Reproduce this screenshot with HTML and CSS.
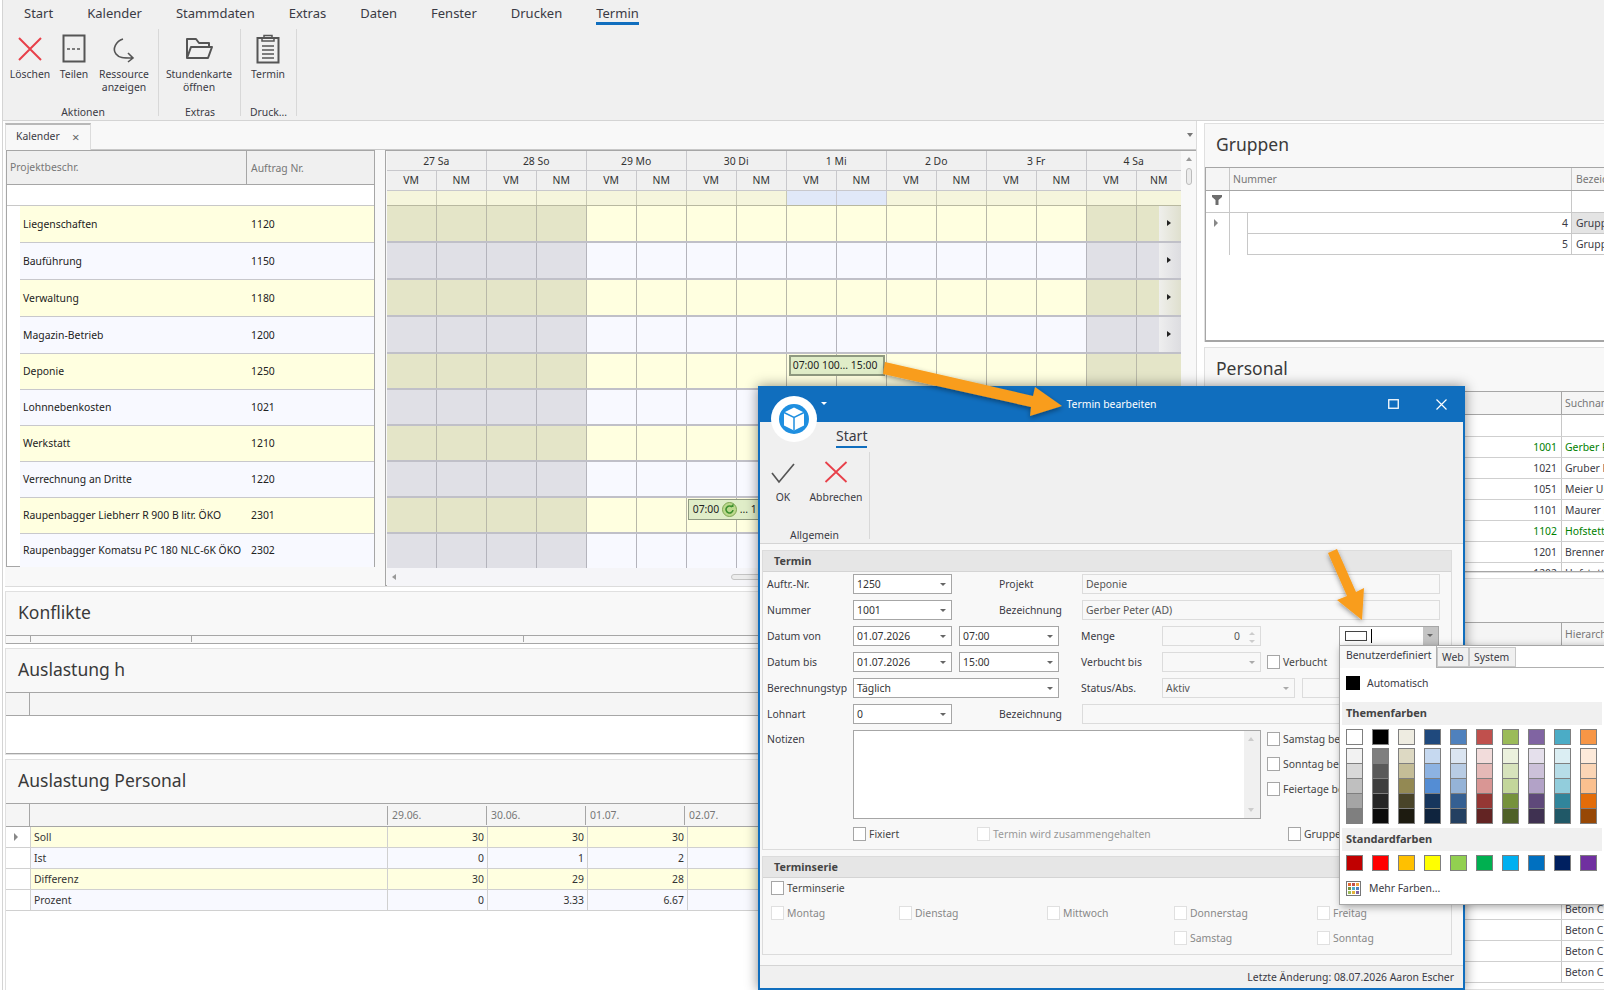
FILE: index.html
```html
<!DOCTYPE html>
<html lang="de">
<head>
  <meta charset="UTF-8">
  <meta name="viewport" content="width=device-width, initial-scale=1.0">
  <title>Termin bearbeiten</title>
  <link rel="stylesheet" href="styles.css">
</head>
<body>

<div class="app">

  <!-- Hauptmenue -->
  <header class="ribbon">
    <nav class="rtabs">
      <span>Start</span><span>Kalender</span><span>Stammdaten</span><span>Extras</span>
      <span>Daten</span><span>Fenster</span><span>Drucken</span><span class="on">Termin</span>
    </nav>
    <div class="rgroups">
      <div class="rgroup g1">
        <div class="rbtns">
          <div class="rbtn w44">
            <svg width="32" height="30" viewBox="0 0 32 30"><path d="M5 4 27 26M27 4 5 26" stroke="#e8404a" stroke-width="2" fill="none"/></svg>
            <span>Löschen</span>
          </div>
          <div class="rbtn w44">
            <svg width="32" height="30" viewBox="0 0 32 30"><rect x="5.5" y="1.5" width="21" height="26" fill="none" stroke="#555" stroke-width="2"/><path d="M9 15h14" stroke="#555" stroke-width="1.5" stroke-dasharray="3 2" fill="none"/></svg>
            <span>Teilen</span>
          </div>
          <div class="rbtn w56">
            <svg width="32" height="30" viewBox="0 0 32 30"><path d="M15 5C8 7 4 15 8 20 11 24 15 24 25 24M20 19l5 5-5 4" stroke="#555" stroke-width="1.6" fill="none"/></svg>
            <span>Ressource<br>anzeigen</span>
          </div>
        </div>
        <div class="rcap">Aktionen</div>
      </div>
      <div class="rgroup g2">
        <div class="rbtns">
          <div class="rbtn w78">
            <svg width="32" height="30" viewBox="0 0 32 30"><path d="M4 24V5h9l3 4h10v4M4 24l4-11h21l-4 11z" stroke="#555" stroke-width="2" fill="none" stroke-linejoin="round"/></svg>
            <span>Stundenkarte<br>öffnen</span>
          </div>
        </div>
        <div class="rcap">Extras</div>
      </div>
      <div class="rgroup g3">
        <div class="rbtns">
          <div class="rbtn w54">
            <svg width="32" height="30" viewBox="0 0 32 30"><rect x="5.5" y="4" width="21" height="24.5" fill="none" stroke="#555" stroke-width="2"/><path d="M12 4V1.5h8V4h2v3H10V4zM10 12h12M10 16h12M10 20h12M10 24h12" stroke="#555" stroke-width="1.5" fill="none"/></svg>
            <span>Termin</span>
          </div>
        </div>
        <div class="rcap">Druck...</div>
      </div>
    </div>
  </header>

  <div class="workspace">

    <!-- linke Spalte -->
    <div class="left">
      <section class="doc">
        <div class="doc-tabs">
          <div class="doc-tab">Kalender <span class="doc-x">×</span></div>
          <span class="doc-menu"></span>
        </div>
        <div class="doc-body">

          <div class="plan-list">
            <div class="pl-head"><div class="pl-c1">Projektbeschr.</div><div class="pl-c2">Auftrag Nr.</div></div>
            <div class="pl-filter"></div>
            <div class="pl-row y tall"><div class="pl-c1">Liegenschaften</div><div class="pl-c2">1120</div></div>
            <div class="pl-row b tall"><div class="pl-c1">Bauführung</div><div class="pl-c2">1150</div></div>
            <div class="pl-row y tall"><div class="pl-c1">Verwaltung</div><div class="pl-c2">1180</div></div>
            <div class="pl-row b tall"><div class="pl-c1">Magazin-Betrieb</div><div class="pl-c2">1200</div></div>
            <div class="pl-row y"><div class="pl-c1">Deponie</div><div class="pl-c2">1250</div></div>
            <div class="pl-row b"><div class="pl-c1">Lohnnebenkosten</div><div class="pl-c2">1021</div></div>
            <div class="pl-row y"><div class="pl-c1">Werkstatt</div><div class="pl-c2">1210</div></div>
            <div class="pl-row b"><div class="pl-c1">Verrechnung an Dritte</div><div class="pl-c2">1220</div></div>
            <div class="pl-row y"><div class="pl-c1">Raupenbagger Liebherr R 900 B litr. ÖKO</div><div class="pl-c2">2301</div></div>
            <div class="pl-row b last"><div class="pl-c1">Raupenbagger Komatsu PC 180 NLC-6K ÖKO</div><div class="pl-c2">2302</div></div>
          </div>

          <div class="sched">
            <div class="sched-main">
              <div class="s-days">
                <div>27 Sa</div><div>28 So</div><div>29 Mo</div><div>30 Di</div><div>1 Mi</div><div>2 Do</div><div>3 Fr</div><div class="lastday">4 Sa</div>
              </div>
              <div class="s-half">
                <div>VM</div><div>NM</div><div>VM</div><div>NM</div><div>VM</div><div>NM</div><div>VM</div><div>NM</div>
                <div>VM</div><div>NM</div><div>VM</div><div>NM</div><div>VM</div><div>NM</div><div>VM</div><div class="lasthalf">NM</div>
              </div>
              <div class="s-all"><span class="today"></span></div>
              <div class="s-row y tall"><span class="more"></span></div>
              <div class="s-row b tall"><span class="more"></span></div>
              <div class="s-row y tall"><span class="more"></span></div>
              <div class="s-row b tall"><span class="more"></span></div>
              <div class="s-row y"><div class="appt a1">07:00 100... 15:00</div></div>
              <div class="s-row b"></div>
              <div class="s-row y"></div>
              <div class="s-row b"></div>
              <div class="s-row y"><div class="appt a2">07:00
                <svg class="rec" width="15" height="15" viewBox="0 0 15 15"><circle cx="7.5" cy="7.5" r="7" fill="#bcd98c" stroke="#7fa653"/><path d="M11 8a3.5 3.5 0 1 1-1-3" fill="none" stroke="#3d8f2e" stroke-width="1.6"/><path d="M8 5h3.5V1.5z" fill="#3d8f2e"/></svg>
                ... 1</div></div>
              <div class="s-row b last"></div>
              <div class="s-hscroll"><span class="arr-left"></span><span class="s-thumb"></span></div>
            </div>
            <div class="s-vscroll"><span class="arr-up"></span><span class="v-thumb"></span></div>
          </div>

        </div>
      </section>

      <section class="panel konflikte">
        <h2>Konflikte</h2>
        <div class="kon-head"><i></i><i class="t2"></i><i class="t3"></i></div>
      </section>

      <section class="panel auslast">
        <h2>Auslastung h</h2>
        <div class="grid-head"><div class="ind"></div></div>
      </section>

      <section class="panel personal-load">
        <h2>Auslastung Personal</h2>
        <div class="load">
          <div class="load-row head"><div class="ind"></div><div class="cn"></div><div class="cd">29.06.</div><div class="cd">30.06.</div><div class="cd">01.07.</div><div class="cd">02.07.</div></div>
          <div class="load-row y"><div class="ind"><span class="tri"></span></div><div class="cn">Soll</div><div class="cv">30</div><div class="cv">30</div><div class="cv">30</div><div class="cv"></div></div>
          <div class="load-row b"><div class="ind"></div><div class="cn">Ist</div><div class="cv">0</div><div class="cv">1</div><div class="cv">2</div><div class="cv"></div></div>
          <div class="load-row y"><div class="ind"></div><div class="cn">Differenz</div><div class="cv">30</div><div class="cv">29</div><div class="cv">28</div><div class="cv"></div></div>
          <div class="load-row b"><div class="ind"></div><div class="cn">Prozent</div><div class="cv">0</div><div class="cv">3.33</div><div class="cv">6.67</div><div class="cv"></div></div>
        </div>
      </section>
    </div>

    <!-- rechte Spalte -->
    <div class="right">
      <section class="panel gruppen">
        <h2>Gruppen</h2>
        <div class="gr-grid">
          <div class="gr-head"><div class="gr-ind"></div><div class="gr-num">Nummer</div><div class="gr-name">Bezeichnung</div></div>
          <div class="gr-filter"><div class="gr-ind">
            <svg width="10" height="10" viewBox="0 0 10 10"><path d="M0 0h10v2L6.500 5v5h-3V5L0 2z" fill="#6d6d6d"/></svg>
          </div><div class="gr-num"></div><div class="gr-name"></div></div>
          <div class="gr-row"><div class="gr-ind"><span class="tri"></span></div><div class="gr-pad"></div><div class="gr-val">4</div><div class="gr-name sel">Gruppe Bau</div></div>
          <div class="gr-row"><div class="gr-ind"></div><div class="gr-pad"></div><div class="gr-val">5</div><div class="gr-name">Gruppe Tief</div></div>
        </div>
      </section>

      <section class="panel personal">
        <h2>Personal</h2>
        <div class="pe-grid">
          <div class="pe-head"><div class="pe-num"></div><div class="pe-name">Suchname</div></div>
          <div class="pe-row filter"><div class="pe-num"></div><div class="pe-name"></div></div>
          <div class="pe-row act"><div class="pe-num">1001</div><div class="pe-name">Gerber Peter</div></div>
          <div class="pe-row"><div class="pe-num">1021</div><div class="pe-name">Gruber Franz</div></div>
          <div class="pe-row"><div class="pe-num">1051</div><div class="pe-name">Meier Urs</div></div>
          <div class="pe-row"><div class="pe-num">1101</div><div class="pe-name">Maurer Paul</div></div>
          <div class="pe-row act"><div class="pe-num">1102</div><div class="pe-name">Hofstetter Hans</div></div>
          <div class="pe-row"><div class="pe-num">1201</div><div class="pe-name">Brenner Max</div></div>
          <div class="pe-row"><div class="pe-num">1202</div><div class="pe-name">Hofstetter Anna</div></div>
        </div>
      </section>

      <section class="panel material">
        <h2>Material</h2>
        <div class="pe-grid">
          <div class="pe-head"><div class="pe-num"></div><div class="pe-name">Hierarchie</div></div>
          <div class="pe-row filter"><div class="pe-num"></div><div class="pe-name"></div></div>
          <div class="pe-row"><div class="pe-num"></div><div class="pe-name">Beton</div></div>
          <div class="pe-row"><div class="pe-num"></div><div class="pe-name">Beton</div></div>
          <div class="pe-row"><div class="pe-num"></div><div class="pe-name">Beton</div></div>
          <div class="pe-row"><div class="pe-num"></div><div class="pe-name">Beton</div></div>
          <div class="pe-row"><div class="pe-num"></div><div class="pe-name">Beton</div></div>
          <div class="pe-row"><div class="pe-num"></div><div class="pe-name">Beton</div></div>
          <div class="pe-row"><div class="pe-num"></div><div class="pe-name">Beton</div></div>
          <div class="pe-row"><div class="pe-num"></div><div class="pe-name">Beton</div></div>
          <div class="pe-row"><div class="pe-num"></div><div class="pe-name">Beton</div></div>
          <div class="pe-row"><div class="pe-num"></div><div class="pe-name">Beton</div></div>
          <div class="pe-row"><div class="pe-num"></div><div class="pe-name sel">Diesel</div></div>
          <div class="pe-row"><div class="pe-num"></div><div class="pe-name">Beton C 25/30</div></div>
          <div class="pe-row"><div class="pe-num"></div><div class="pe-name">Beton C 30/37</div></div>
          <div class="pe-row"><div class="pe-num"></div><div class="pe-name">Beton C 35/45</div></div>
          <div class="pe-row"><div class="pe-num"></div><div class="pe-name">Beton C 40/50</div></div>
        </div>
      </section>
    </div>
  </div>

  <!-- Dialog -->
  <div class="dialog">
    <div class="dlg-title">
      <span>Termin bearbeiten</span>
      <svg class="dlg-max" width="11" height="10" viewBox="0 0 11 10"><rect x=".75" y=".75" width="9.500" height="8.500" fill="none" stroke="#fff" stroke-width="1.3"/></svg>
      <svg class="dlg-close" width="11" height="11" viewBox="0 0 11 11"><path d="M.5.500l10 10M10.500.500l-10 10" stroke="#fff" stroke-width="1.200" fill="none"/></svg>
      <span class="dlg-caret"></span>
    </div>
    <div class="dlg-logo">
      <svg width="30" height="30" viewBox="0 0 30 30"><circle cx="15" cy="15" r="15" fill="#1f8fe0"/><path d="M15 3.500l10 5v13l-10 5-10-5v-13z" fill="#fff"/><path d="M5 8.500l10 5 10-5M15 13.500v13" stroke="#1f8fe0" stroke-width="1.500" fill="none"/></svg>
    </div>

    <div class="dlg-ribbon">
      <div class="dlg-tab"><span>Start</span></div>
      <div class="dlg-group">
        <div class="rbtns">
          <div class="dbtn ok">
            <svg width="26" height="24" viewBox="0 0 26 24"><path d="M2 13l7 9L24 4" stroke="#555" stroke-width="1.700" fill="none"/></svg>
            <span>OK</span>
          </div>
          <div class="dbtn cancel">
            <svg width="26" height="24" viewBox="0 0 26 24"><path d="M2.500 2 23.500 22M23.500 2 2.500 22" stroke="#e8404a" stroke-width="1.800" fill="none"/></svg>
            <span>Abbrechen</span>
          </div>
        </div>
        <div class="rcap">Allgemein</div>
      </div>
    </div>

    <div class="dlg-body">
      <div class="fgroup termin">
        <div class="fhead">Termin</div>
        <div class="form">
          <div class="frow">
            <label>Auftr.-Nr.</label>
            <div class="box combo c2">1250</div>
            <label class="l2">Projekt</label>
            <div class="box ro wide">Deponie</div>
          </div>
          <div class="frow">
            <label>Nummer</label>
            <div class="box combo c2">1001</div>
            <label class="l2">Bezeichnung</label>
            <div class="box ro wide">Gerber Peter (AD)</div>
          </div>
          <div class="frow">
            <label>Datum von</label>
            <div class="box combo c2">01.07.2026</div>
            <div class="box combo c4">07:00</div>
            <label class="l6">Menge</label>
            <div class="box ro c7 num">0<span class="spin"></span></div>
            <div class="color-edit">
              <div class="ce-field"><span class="ce-swatch"></span><span class="ce-cursor"></span></div>
              <div class="ce-btn"></div>
              <div class="popup">
                <div class="pop-tabs"><span class="active">Benutzerdefiniert</span><span class="t-web">Web</span><span class="t-sys">System</span></div>
                <div class="pop-auto"><i></i>Automatisch</div>
                <div class="pop-head">Themenfarben</div>
                <div class="pal-row" id="palTheme"></div>
                <div class="pal-cols" id="palShades"></div>
                <div class="pop-head std">Standardfarben</div>
                <div class="pal-row std" id="palStd"></div>
                <div class="pop-more">
                  <svg width="15" height="15" viewBox="0 0 15 15"><rect x=".5" y=".5" width="14" height="14" fill="#fff" stroke="#777"/><path d="M2 2h3v3H2z" fill="#e2662f"/><path d="M6 2h3v3H6z" fill="#c0504d"/><path d="M10 2h3v3h-3z" fill="#f2a33a"/><path d="M2 6h3v3H2z" fill="#76923c"/><path d="M6 6h3v3H6z" fill="#4bacc6"/><path d="M10 6h3v3h-3z" fill="#4f81bd"/><path d="M2 10h3v3H2z" fill="#9bbb59"/><path d="M6 10h3v3H6z" fill="#e3b23c"/><path d="M10 10h3v3h-3z" fill="#8064a2"/></svg>
                  Mehr Farben...
                </div>
              </div>
            </div>
          </div>
          <div class="frow">
            <label>Datum bis</label>
            <div class="box combo c2">01.07.2026</div>
            <div class="box combo c4">15:00</div>
            <label class="l6">Verbucht bis</label>
            <div class="box combo ro c7"></div>
            <div class="check c9"><i></i>Verbucht</div>
          </div>
          <div class="frow">
            <label>Berechnungstyp</label>
            <div class="box combo c24">Täglich</div>
            <label class="l6">Status/Abs.</label>
            <div class="status">
              <div class="box combo ro">Aktiv</div>
              <div class="box ro blank"></div>
            </div>
          </div>
          <div class="frow">
            <label>Lohnart</label>
            <div class="box combo c2">0</div>
            <label class="l2">Bezeichnung</label>
            <div class="box ro wide"></div>
          </div>
          <div class="frow notes">
            <label>Notizen</label>
            <div class="memo">
              <div class="memo-bar"><span class="arr-up"></span><span class="arr-down"></span></div>
            </div>
            <div class="note-checks">
              <div class="check"><i></i>Samstag berücksichtigen</div>
              <div class="check"><i></i>Sonntag berücksichtigen</div>
              <div class="check"><i></i>Feiertage berücksichtigen</div>
            </div>
          </div>
          <div class="check-line">
            <div class="check"><i></i>Fixiert</div>
            <div class="check off"><i></i>Termin wird zusammengehalten</div>
            <div class="check"><i></i>Gruppe</div>
          </div>
        </div>
      </div>

      <div class="fgroup serie">
        <div class="fhead">Terminserie</div>
        <div class="check main"><i></i>Terminserie</div>
        <div class="days">
          <div class="check off"><i></i>Montag</div>
          <div class="check off"><i></i>Dienstag</div>
          <div class="check off"><i></i>Mittwoch</div>
          <div class="check off"><i></i>Donnerstag</div>
          <div class="check off"><i></i>Freitag</div>
          <div class="check off d4"><i></i>Samstag</div>
          <div class="check off"><i></i>Sonntag</div>
        </div>
      </div>
    </div>

    <div class="dlg-status">Letzte Änderung: 08.07.2026 Aaron Escher</div>
  </div>

  <!-- Pfeile -->
  <svg class="arrows" width="1604" height="990" viewBox="0 0 1604 990">
    <defs>
      <filter id="sh" x="-20%" y="-20%" width="140%" height="140%"><feDropShadow dx="0" dy="2" stdDeviation="2.500" flood-color="#000" flood-opacity=".4"/></filter>
    </defs>
    <path filter="url(#sh)" fill="#f99d1c" d="M885 362 1033 396 1035 387 1062 406 1030 416 1031 407 883 374z"/>
    <path filter="url(#sh)" fill="#f99d1c" d="M1328 553 1337 549 1356 592 1364 588 1362 620 1337 600 1347 596z"/>
  </svg>
</div>

<script src="script.js"></script>
</body>
</html>
```

FILE: styles.css
```css
* { box-sizing: border-box; }

html, body {
  margin: 0;
  padding: 0;
  width: 1604px;
  height: 990px;
  overflow: hidden;
}

body {
  font-family: "Noto Sans", "Open Sans", sans-serif;
  font-size: 10.4px;
  color: #3a3a44;
  background-color: #fff;
}

.app {
  position: relative;
  width: 1604px;
  height: 990px;
  overflow: hidden;
  padding-left: 2px;
}

/* Ribbon */
.ribbon {
  height: 121px;
  background-color: #f0f0f0;
  border-left: 1px solid #d4d4d4;
  border-bottom: 1px solid #d4d4d4;
  display: flex;
  flex-direction: column;
}

.rtabs {
  display: flex;
  gap: 34px;
  padding-left: 21px;
  height: 25px;
  font-size: 13px;
  line-height: 26px;
}

.rtabs .on {
  height: 25px;
  border-bottom: 3px solid #106ebe;
  line-height: 26px;
}

.rgroups {
  display: flex;
  margin-top: 4px;
  height: 87px;
}

.rgroup {
  display: flex;
  flex-direction: column;
  border-right: 1px solid #d8d8d8;
}

.g1 { width: 156px; padding-left: 5px; }
.g2 { width: 82px; padding-left: 1px; }
.g3 { width: 56px; }

.rbtns {
  display: flex;
  flex: 1;
}

.rbtn {
  display: flex;
  flex-direction: column;
  align-items: center;
  padding-top: 5px;
  text-align: center;
  line-height: 13px;
}

.rbtn svg { margin-bottom: 4px; }

.w44 { width: 44px; }
.w56 { width: 56px; }
.w78 { width: 78px; }
.w54 { width: 54px; }

.rcap {
  text-align: center;
  height: 14px;
  line-height: 14px;
  margin-bottom: -3px;
}

/* Arbeitsbereich */
.workspace {
  display: flex;
  height: 869px;
  background-color: #fff;
}

.left {
  width: 1195px;
  border-left: 1px solid #d4d4d4;
  display: flex;
  flex-direction: column;
  padding-left: 2px;
  background-color: #fff;
}

.right {
  flex: 1;
  margin-left: 7px;
  padding-top: 2px;
  min-width: 0;
  display: flex;
  flex-direction: column;
  gap: 5px;
}

.doc {
  height: 466px;
  background-color: #f8f8f8;
  border-bottom: 1px solid #dcdcdc;
  border-right: 1px solid #dcdcdc;
}

.doc-tabs {
  position: relative;
  height: 29px;
  border-bottom: 1px solid #c8c8c8;
  padding-top: 2px;
}

.doc-tab {
  width: 86px;
  height: 27px;
  background-color: #f8f8f8;
  border: 1px solid #dcdcdc;
  border-top: 2px solid #b8b8b8;
  border-bottom: 0;
  padding: 4px 0 0 10px;
  margin-bottom: -1px;
  position: relative;
}

.doc-x {
  position: absolute;
  left: 66px;
  top: 5px;
  color: #666;
  font-size: 13px;
  line-height: 14px;
}

.doc-menu {
  position: absolute;
  left: 1182px;
  top: 12px;
  border: 3px solid transparent;
  border-top: 4px solid #777;
}

.doc-body {
  display: flex;
  align-items: flex-start;
  height: 436px;
  padding-left: 1px;
}

/* Projektliste */
.plan-list {
  width: 369px;
  height: 417px;
  background-color: #fff;
  border: 1px solid #a6a6a6;
  border-top-width: 1px;
}

.pl-head {
  display: flex;
  height: 34px;
  background-color: #f0f0f0;
  border-bottom: 1px solid #a6a6a6;
  color: #777;
  align-items: center;
}

.pl-head .pl-c1 {
  width: 240px;
  padding-left: 3px;
  height: 100%;
  border-right: 1px solid #a6a6a6;
  line-height: 33px;
}

.pl-head .pl-c2 { padding-left: 4px; }

.pl-filter {
  height: 21px;
  border-bottom: 1px solid #c8c8c8;
}

.pl-row {
  display: flex;
  align-items: center;
  height: 36px;
  margin-left: 13px;
  padding-bottom: 1px;
  border-bottom: 1px solid #c8c8cc;
  color: #222;
}

.pl-row.tall { height: 37px; }
.pl-row.last { height: 33px; border-bottom: 0; }
.pl-row.y { background-color: #ffffe0; }
.pl-row.b { background-color: #f8f9ff; }

.pl-row .pl-c1 {
  width: 231px;
  padding-left: 3px;
  white-space: nowrap;
}

.pl-row .pl-c2 { padding-left: 0; }

/* Plantafel */
.sched {
  display: flex;
  margin-left: 10px;
  width: 812px;
  height: 436px;
  border-left: 1px solid #a6a6a6;
  border-top: 1px solid #a6a6a6;
  border-bottom: 1px solid #a6a6a6;
  background-color: #f8f8f8;
}

.sched-main { width: 794px; margin-left: 1px; }

.s-days, .s-half {
  display: flex;
  height: 20px;
  background-color: #f0f0f0;
  border-bottom: 1px solid #c8c8cc;
  text-align: center;
  line-height: 19px;
  color: #333;
}

.s-days { line-height: 20px; }

.s-days div {
  width: 100px;
  border-right: 1px solid #c8c8cc;
}

.s-days .lastday { width: 94px; border-right: 0; }

.s-half div {
  width: 50px;
  border-right: 1px solid #c8c8cc;
}

.s-half .lasthalf { width: 44px; border-right: 0; }

.s-all {
  position: relative;
  height: 15px;
  border-bottom: 1px solid #b8b8a0;
  background-color: #f5f5dc;
  background-image: repeating-linear-gradient(90deg, transparent 0 49px, #c8c8b4 49px 50px);
}

.s-all .today {
  position: absolute;
  left: 400px;
  top: 0;
  width: 100px;
  height: 14px;
  background-image: repeating-linear-gradient(90deg, transparent 0 49px, #c8c8d0 49px 50px);
  background-color: #e0e8f8;
}

.s-row {
  position: relative;
  height: 36px;
  border-bottom: 2px solid #c0c0c8;
}

.s-row.tall { height: 37px; }
.s-row.last { height: 34px; border-bottom: 0; }

.s-row.y {
  background-color: #ffffe0;
  background-image:
    repeating-linear-gradient(90deg, transparent 0 49px, #b8b8a8 49px 50px),
    linear-gradient(90deg, #e4e5c8 200px, transparent 200px 700px, #e4e5c8 700px);
}

.s-row.b {
  background-color: #f8f9ff;
  background-image:
    repeating-linear-gradient(90deg, transparent 0 49px, #b4b4bc 49px 50px),
    linear-gradient(90deg, #e0e0e6 200px, transparent 200px 700px, #e0e0e6 700px);
}

.more {
  position: absolute;
  right: 0;
  top: 0;
  width: 22px;
  height: 100%;
  background: linear-gradient(90deg, rgba(240, 240, 240, .9), rgba(215, 215, 215, .4));
}

.more::after {
  content: "";
  position: absolute;
  left: 8px;
  top: 14px;
  border: 3.5px solid transparent;
  border-left: 4px solid #222;
}

.appt {
  position: absolute;
  height: 21px;
  top: 1px;
  background-color: #e0edc8;
  border: 2px solid #8f9a80;
  color: #222;
  line-height: 17px;
  padding-left: 2px;
  white-space: nowrap;
  overflow: hidden;
}

.a1 { left: 402px; width: 96px; }
.a2 { left: 301px; width: 100px; border-width: 1px; padding-left: 4px; line-height: 18px; }

.rec { vertical-align: -4px; }

.s-hscroll {
  position: relative;
  height: 18px;
  background-color: #f5f5f8;
}

.arr-left {
  position: absolute;
  left: 5px;
  top: 6px;
  border: 3.5px solid transparent;
  border-left: 0;
  border-right: 4px solid #999;
}

.s-thumb {
  position: absolute;
  left: 344px;
  top: 6px;
  width: 300px;
  height: 6px;
  border: 1px solid #c4c4c4;
  border-radius: 3px;
  background-color: #ececec;
}

.s-vscroll {
  position: relative;
  flex: 1;
  background-color: #f8f8f8;
}

.arr-up {
  position: absolute;
  left: 5px;
  top: 6px;
  border: 3.5px solid transparent;
  border-top: 0;
  border-bottom: 4px solid #999;
}

.v-thumb {
  position: absolute;
  left: 5px;
  top: 17px;
  width: 6px;
  height: 17px;
  border: 1px solid #bcbcbc;
  border-radius: 3px;
  background-color: #ececec;
}

/* Panels */
.panel {
  background-color: #f8f8f8;
  border: 1px solid #e0e0e0;
  margin-top: 4px;
}

.right .panel { margin-top: 0; border-right: 0; }

.panel h2 {
  margin: 0;
  height: 43px;
  padding-left: 12px;
  font-size: 17.5px;
  font-weight: 400;
  line-height: 40px;
  color: #3a3a3a;
}

.right .panel h2 { padding-left: 11px; }

.konflikte { height: 53px; }

.kon-head {
  position: relative;
  height: 9px;
  border-top: 1px solid #a6a6a6;
  border-bottom: 1px solid #a6a6a6;
}

.kon-head i {
  position: absolute;
  left: 24px;
  top: 0;
  height: 6px;
  border-left: 1px solid #a6a6a6;
}

.kon-head .t2 { left: 185px; }
.kon-head .t3 { left: 517px; }

.auslast { height: 107px; }

.grid-head {
  height: 24px;
  background-color: #f5f5f5;
  border-top: 1px solid #a6a6a6;
  border-bottom: 1px solid #a6a6a6;
}

.grid-head .ind {
  width: 24px;
  height: 100%;
  border-right: 1px solid #a6a6a6;
}

.auslast::after {
  content: "";
  display: block;
  height: 37px;
  background-color: #fff;
  border-bottom: 1px solid #a6a6a6;
}

.personal-load { flex: 1; background-color: #f8f8f8; }

.load {
  height: 100%;
  background-color: #fff;
  border-top: 1px solid #a6a6a6;
}

.load-row {
  display: flex;
  height: 21px;
  line-height: 20px;
  color: #333;
}

.load-row .ind {
  position: relative;
  width: 24px;
  background-color: #f5f5f5;
  border-right: 1px solid #a6a6a6;
}

.load-row.head {
  height: 23px;
  background-color: #f5f5f5;
  border-bottom: 1px solid #a6a6a6;
  color: #777;
  line-height: 22px;
}

.load-row.y, .load-row.b { border-bottom: 1px solid #d0d0d0; }
.load-row.y { background-color: #ffffe0; }
.load-row.b { background-color: #f8f9ff; }

.cn {
  width: 358px;
  padding-left: 3px;
  border-right: 1px solid #d0d0d0;
}

.cd, .cv {
  width: 100px;
  border-right: 1px solid #d0d0d0;
}

.cd {
  padding-left: 4px;
  border-right: 0;
  border-left: 1px solid #a6a6a6;
  margin: 2px 0 2px -1px;
  height: 19px;
  line-height: 19px;
}

.head .cn { border-right: 0; }

.cv { text-align: right; padding-right: 3px; }

.load-row:not(.head) .ind { background-color: #fff; border-right: 0; width: 24px; }
.load-row:not(.head) .cn { border-left: 1px solid #d0d0d0; }

.tri {
  position: absolute;
  left: 8px;
  top: 6px;
  border: 4px solid transparent;
  border-left: 4px solid #888;
  border-right: 0;
}

/* Gruppen */
.gruppen { height: 219px; }

.gr-grid {
  height: 175px;
  background-color: #fff;
  border-top: 1px solid #a6a6a6;
  border-bottom: 2px solid #a6a6a6;
  border-left: 1px solid #a6a6a6;
}

.gr-head, .gr-filter, .gr-row { display: flex; }

.gr-head {
  height: 23px;
  background-color: #f5f5f5;
  border-bottom: 1px solid #a6a6a6;
  color: #777;
  line-height: 22px;
}

.gr-filter {
  height: 22px;
  border-bottom: 1px solid #c8c8c8;
}

.gr-ind {
  position: relative;
  width: 24px;
  border-right: 1px solid #c8c8c8;
  padding: 3px 0 0 6px;
  flex: none;
}

.gr-num {
  width: 342px;
  padding-left: 3px;
  border-right: 1px solid #c8c8c8;
  flex: none;
}

.gr-name { padding-left: 4px; white-space: nowrap; flex: 1; }

.gr-row { height: 21px; line-height: 20px; }

.gr-pad { width: 18px; flex: none; border-right: 1px solid #c8c8c8; }

.gr-val {
  width: 324px;
  flex: none;
  text-align: right;
  padding-right: 3px;
  border-right: 1px solid #c8c8c8;
  border-bottom: 1px solid #c8c8c8;
}

.gr-row .gr-name { border-bottom: 1px solid #c8c8c8; }
.gr-row .sel { background-color: #e4e4e4; }

/* Personal */
.personal { height: 226px; overflow: hidden; }

.material { flex: 1; overflow: hidden; }

.pe-grid {
  background-color: #fff;
  border-top: 1px solid #a6a6a6;
  height: 100%;
}

.personal .pe-grid {
  height: 182px;
  border-bottom: 2px solid #a6a6a6;
  overflow: hidden;
}

.pe-head, .pe-row { display: flex; }

.pe-head {
  height: 23px;
  background-color: #f5f5f5;
  border-bottom: 1px solid #a6a6a6;
  color: #777;
  line-height: 22px;
}

.pe-num {
  width: 357px;
  flex: none;
  text-align: right;
  padding-right: 4px;
  border-right: 1px solid #c8c8c8;
}

.pe-head .pe-num { border-right-color: #a6a6a6; }

.pe-name {
  padding-left: 3px;
  white-space: nowrap;
  flex: 1;
}

.pe-row {
  height: 21px;
  line-height: 20px;
  border-bottom: 1px solid #cfcfcf;
}

.pe-row.filter { height: 22px; }
.pe-row.act { color: #008000; }
.pe-name.sel { background-color: #ededed; }

/* Dialog */
.dialog {
  position: absolute;
  left: 758px;
  top: 386px;
  width: 707px;
  height: 604px;
  background-color: #f8f8f8;
  border: 2px solid #106ebe;
  border-top: 0;
  box-shadow: 0 0 12px rgba(0, 0, 0, .45);
  display: flex;
  flex-direction: column;
}

.dlg-title {
  position: relative;
  height: 36px;
  flex: none;
  margin: 0 -2px;
  background-color: #106ebe;
  color: #fff;
  text-align: center;
  line-height: 36px;
}

.dlg-max { position: absolute; left: 630px; top: 13px; }
.dlg-close { position: absolute; left: 678px; top: 13px; }

.dlg-caret {
  position: absolute;
  left: 63px;
  top: 16px;
  border: 3px solid transparent;
  border-top: 3.5px solid #fff;
}

.dlg-logo {
  position: absolute;
  left: 11px;
  top: 10px;
  width: 46px;
  height: 46px;
  padding: 8px;
  border-radius: 50%;
  background-color: #fff;
}

.dlg-ribbon {
  height: 122px;
  flex: none;
  background-color: #f0f0f0;
  border-bottom: 1px solid #d4d4d4;
  padding-left: 76px;
}

.dlg-tab {
  height: 25px;
  padding-top: 5px;
  font-size: 14px;
  line-height: 18px;
}

.dlg-tab span {
  display: inline-block;
  height: 21px;
  border-bottom: 2px solid #106ebe;
}

.dlg-group {
  display: flex;
  flex-direction: column;
  margin: 5px 0 0 -76px;
  width: 110px;
  height: 87px;
  border-right: 1px solid #d8d8d8;
}

.dbtn {
  display: flex;
  flex-direction: column;
  align-items: center;
  padding-top: 8px;
  line-height: 14px;
}

.dbtn svg { margin-bottom: 6px; }

.dbtn.ok { width: 46px; }
.dbtn.cancel { width: 60px; }

.dlg-body { flex: 1; padding: 6px 11px 0 2px; }

.fgroup {
  border: 1px solid #dcdcdc;
}

.termin { height: 300px; }

.serie { height: 99px; margin-top: 6px; position: relative; }

.fhead {
  height: 21px;
  background-color: #e6e6e6;
  border-bottom: 1px solid #d4d4d4;
  padding-left: 11px;
  font-size: 10.8px;
  font-weight: 700;
  line-height: 20px;
  color: #444;
}

.form { padding: 2px 0 0 4px; }

.frow {
  display: grid;
  grid-template-columns: 86px 99px 7px 100px 22px 81px 99px 6px 173px;
  height: 20px;
  margin-bottom: 6px;
  align-items: center;
}

.frow label { margin-top: -1px; }

.box {
  position: relative;
  height: 20px;
  background-color: #fff;
  border: 1px solid #a6a6a6;
  padding-left: 3px;
  line-height: 18px;
  color: #333;
  white-space: nowrap;
}

.box.ro {
  background-color: #f8f8f8;
  border-color: #dcdcdc;
  color: #555;
}

.combo::after {
  content: "";
  position: absolute;
  right: 5px;
  top: 8px;
  border: 3px solid transparent;
  border-top: 3.5px solid #666;
}

.combo.ro::after { border-top-color: #aaa; }

.c2 { grid-column: 2; }
.c4 { grid-column: 4; }
.c24 { grid-column: 2 / 5; }
.c7 { grid-column: 7; }
.c9 { grid-column: 9; }
.l2 { grid-column: 3 / 6; padding-left: 47px; }
.l6 { grid-column: 6; }
.wide { grid-column: 6 / -1; margin-left: 1px; }

.num { text-align: right; padding-right: 20px; }

.spin {
  position: absolute;
  right: 5px;
  top: 2px;
  border: 3px solid transparent;
  border-bottom: 3.5px solid #ccc;
}

.spin::after {
  content: "";
  position: absolute;
  left: -3px;
  top: 8px;
  border: 3px solid transparent;
  border-top: 3.5px solid #ccc;
}

.status {
  grid-column: 7 / -1;
  display: flex;
  gap: 7px;
}

.status .combo { width: 133px; flex: none; }
.status .blank { flex: 1; }

.color-edit {
  grid-column: 9;
  position: relative;
  display: flex;
  margin-left: 72px;
  width: 100px;
  height: 20px;
  border: 1px solid #a6a6a6;
  background-color: #fff;
}

.ce-field {
  flex: 1;
  display: flex;
  align-items: center;
  padding-left: 5px;
}

.ce-swatch {
  width: 22px;
  height: 10px;
  border: 1px solid #444;
}

.ce-cursor {
  margin-left: 4px;
  width: 1px;
  height: 14px;
  background-color: #000;
}

.ce-btn {
  position: relative;
  width: 15px;
  background-color: #c4c4c4;
}

.ce-btn::after {
  content: "";
  position: absolute;
  left: 4px;
  top: 7px;
  border: 3px solid transparent;
  border-top: 3.5px solid #666;
}

/* Farbauswahl */
.popup {
  position: absolute;
  left: -1px;
  top: 18px;
  z-index: 5;
  width: 290px;
  height: 260px;
  background-color: #fff;
  border: 1px solid #a6a6a6;
  box-shadow: 2px 2px 8px rgba(0, 0, 0, .35);
}

.pop-tabs {
  display: flex;
  height: 22px;
  border-bottom: 1px solid #b0b0b0;
  background-color: #fff;
}

.pop-tabs span {
  height: 20px;
  margin-top: 1px;
  padding: 1px 0 0 4px;
  background-color: #f0f0f0;
  border: 1px solid #c8c8c8;
  line-height: 17px;
}

.pop-tabs .t-web { width: 32px; }
.pop-tabs .t-sys { width: 47px; }

.pop-tabs .active {
  width: 97px;
  height: 22px;
  margin-top: 0;
  padding: 1px 0 0 6px;
  background-color: #f8f8f8;
  border: 0;
  border-right: 1px solid #b0b0b0;
}

.pop-auto {
  display: flex;
  align-items: center;
  gap: 7px;
  height: 34px;
  padding: 0 0 4px 6px;
}

.pop-auto i {
  width: 14px;
  height: 14px;
  background-color: #000;
}

.pop-head {
  margin: 0 0 0 2px;
  width: 260px;
  height: 23px;
  padding-left: 4px;
  background-color: #f0f0f0;
  font-size: 11px;
  font-weight: 700;
  line-height: 22px;
  color: #444;
}

.pop-head.std { margin-top: 4px; }

.pal-row {
  display: flex;
  gap: 9px;
  padding: 4px 0 0 6px;
}

.pal-row i {
  width: 17px;
  height: 16px;
  border: 1px solid #7f7f7f;
}

.pal-cols {
  display: flex;
  gap: 9px;
  padding: 3px 0 0 6px;
}

.pal-col {
  display: flex;
  flex-direction: column;
  width: 17px;
  height: 76px;
  border: 1px solid #7f7f7f;
}

.pal-col i {
  flex: 1;
  border-bottom: 1px solid #7f7f7f;
}

.pal-col i:last-child { border-bottom: 0; }

.pop-more {
  display: flex;
  align-items: center;
  gap: 8px;
  height: 34px;
  padding: 0 0 0 6px;
}

/* Checkboxen */
.check {
  display: flex;
  align-items: center;
  gap: 3px;
  white-space: nowrap;
  height: 20px;
  color: #444;
}

.check i {
  width: 13px;
  height: 14px;
  background-color: #fff;
  border: 1px solid #a6a6a6;
  flex: none;
}

.check.off { color: #888; }
.check.off i { border-color: #e0e0e0; }

.frow.notes {
  height: 87px;
  margin-top: 1px;
  align-items: start;
  margin-bottom: 6px;
}

.notes label { margin-top: 0; padding-top: 2px; }

.memo {
  position: relative;
  grid-column: 2 / 8;
  height: 89px;
  background-color: #fff;
  border: 1px solid #a6a6a6;
}

.memo-bar {
  position: absolute;
  right: 0;
  top: 0;
  width: 16px;
  height: 100%;
  background-color: #f0f0f0;
}

.memo-bar .arr-up { left: 4px; top: 6px; border-bottom-color: #ccc; }

.arr-down {
  position: absolute;
  left: 4px;
  bottom: 6px;
  border: 3.5px solid transparent;
  border-bottom: 0;
  border-top: 4px solid #ccc;
}

.note-checks {
  grid-column: 9;
  display: flex;
  flex-direction: column;
  gap: 5px;
  width: 72px;
  margin-top: -1px;
  overflow: hidden;
}

.check-line {
  display: grid;
  grid-template-columns: 124px 311px 1fr;
  height: 20px;
  padding: 1px 0 0 86px;
}

.check-line .off { color: #999; }

.serie .main { margin: 0 0 0 8px; }

.days {
  display: grid;
  grid-template-columns: 128px 148px 127px 143px 1fr;
  grid-auto-rows: 20px;
  row-gap: 5px;
  padding-left: 8px;
  margin-top: 5px;
}

.days .d4 { grid-column: 4; }

.dlg-status {
  flex: none;
  height: 23px;
  margin: 0;
  background-color: #f0f0f0;
  border-top: 1px solid #d4d4d4;
  text-align: right;
  padding-right: 9px;
  line-height: 22px;
}

.arrows {
  position: absolute;
  left: 0;
  top: 0;
  pointer-events: none;
}
```

FILE: script.js
```js
// Office-Farbpalette fuer die Farbauswahl
const themeFarben = ["#FFFFFF", "#000000", "#EEECE1", "#1F497D", "#4F81BD", "#C0504D", "#9BBB59", "#8064A2", "#4BACC6", "#F79646"];
const abstufungen = [
  ["#F2F2F2", "#D8D8D8", "#BFBFBF", "#A5A5A5", "#7F7F7F"],
  ["#7F7F7F", "#595959", "#3F3F3F", "#262626", "#0C0C0C"],
  ["#DDD9C3", "#C4BD97", "#938953", "#494429", "#1D1B10"],
  ["#C6D9F0", "#8DB3E2", "#548DD4", "#17365D", "#0F243E"],
  ["#DBE5F1", "#B8CCE4", "#95B3D7", "#366092", "#244061"],
  ["#F2DCDB", "#E5B9B7", "#D99694", "#953734", "#632423"],
  ["#EBF1DD", "#D7E3BC", "#C3D69B", "#76923C", "#4F6128"],
  ["#E5E0EC", "#CCC1D9", "#B2A2C7", "#5F497A", "#3F3151"],
  ["#DBEEF3", "#B7DDE8", "#92CDDC", "#31859B", "#205867"],
  ["#FDEADA", "#FBD5B5", "#FAC08F", "#E36C09", "#974806"]
];
const standardFarben = ["#C00000", "#FF0000", "#FFC000", "#FFFF00", "#92D050", "#00B050", "#00B0F0", "#0070C0", "#002060", "#7030A0"];

function swatch(farbe) {
  const i = document.createElement("i");
  i.style.backgroundColor = farbe;
  return i;
}

themeFarben.forEach(f => document.getElementById("palTheme").appendChild(swatch(f)));
standardFarben.forEach(f => document.getElementById("palStd").appendChild(swatch(f)));

abstufungen.forEach(spalte => {
  const col = document.createElement("div");
  col.className = "pal-col";
  spalte.forEach(f => col.appendChild(swatch(f)));
  document.getElementById("palShades").appendChild(col);
});
```
